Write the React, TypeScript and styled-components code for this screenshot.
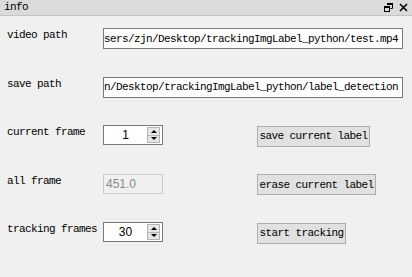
import React from "react";
import styled, { createGlobalStyle } from "styled-components";

const GlobalStyle = createGlobalStyle`
  html, body {
    margin: 0;
    padding: 0;
    background: #f0f0f0;
  }
  body {
    font-family: "Liberation Mono", "DejaVu Sans Mono", monospace;
  }
`

const Dock = styled.div`
  width: 412px;
  height: 277px;
  background: #f0f0f0;
  display: flex;
  flex-direction: column;
  overflow: hidden;
`

const TitleBar = styled.div`
  height: 15px;
  background: #dbdbdb;
  border-bottom: 1px solid #c4c4c4;
  display: flex;
  align-items: center;
  justify-content: space-between;
  padding: 0 4px 0 4px;
`

const Title = styled.span`
  font-size: 11px;
  letter-spacing: -0.6px;
  color: #000;
  line-height: 15px;
`

const TitleButtons = styled.div`
  display: flex;
  align-items: center;
  gap: 6px;
  height: 15px;
`

const Form = styled.div`
  display: grid;
  grid-template-columns: 96px 154px 1fr;
  grid-template-rows: repeat(5, 21.5px);
  row-gap: 27px;
  padding: 12px 9px 0 7px;
`

const Label = styled.span`
  font-size: 11px;
  letter-spacing: -0.6px;
  line-height: 13px;
  color: #000;
  align-self: start;
  padding-top: 1px;
  white-space: nowrap;
`

const PathField = styled.div`
  grid-column: 2 / 4;
  height: 21px;
  box-sizing: border-box;
  border: 1px solid #7a7a7a;
  background: #fff;
  display: flex;
  justify-content: flex-end;
  align-items: center;
  overflow: hidden;
  padding-right: 4px;
`

const PathText = styled.span`
  font-size: 11px;
  letter-spacing: -0.6px;
  white-space: nowrap;
  color: #000;
`

const SpinBox = styled.div<{ $disabled?: boolean }>`
  width: 60px;
  height: 20px;
  box-sizing: border-box;
  border: 1px solid ${p => (p.$disabled ? "#cccccc" : "#7a7a7a")};
  background: ${p => (p.$disabled ? "#f0f0f0" : "#fff")};
  display: flex;
  align-items: center;
  align-self: start;
`

const SpinValue = styled.span<{ $disabled?: boolean }>`
  flex: 1;
  font-family: "Liberation Sans", "DejaVu Sans", sans-serif;
  font-size: 12px;
  color: ${p => (p.$disabled ? "#8a8a8a" : "#000")};
  text-align: ${p => (p.$disabled ? "left" : "center")};
  padding-left: ${p => (p.$disabled ? "2px" : "0")};
`

const Arrows = styled.div`
  width: 11px;
  height: 14px;
  margin-right: 2px;
  border: 1px solid #b5b5b5;
  background: #e6e6e6;
  display: flex;
  flex-direction: column;
`

const ArrowCell = styled.div<{ $down?: boolean }>`
  flex: 1;
  display: flex;
  align-items: center;
  justify-content: center;
  border-top: ${p => (p.$down ? "1px solid #b5b5b5" : "none")};

  &::after {
    content: "";
    width: 0;
    height: 0;
    border-left: 3px solid transparent;
    border-right: 3px solid transparent;
    ${p => (p.$down ? "border-top: 3px solid #000;" : "border-bottom: 3px solid #000;")}
  }
`

const Button = styled.button`
  justify-self: start;
  align-self: start;
  height: 21px;
  box-sizing: border-box;
  padding: 0 1.5px;
  margin-top: 0.5px;
  border: 1px solid #adadad;
  background: #e1e1e1;
  font-family: "Liberation Mono", "DejaVu Sans Mono", monospace;
  font-size: 11px;
  letter-spacing: -0.6px;
  color: #000;
  white-space: nowrap;
  cursor: default;
`

function FloatIcon() {
  return (
    <svg width="9" height="9" viewBox="0 0 9 9">
      <path d="M3 0.5h5.5v5h-2" fill="none" stroke="#000" strokeWidth="1" />
      <rect x="3" y="0" width="6" height="2" fill="#000" />
      <rect x="0.5" y="3.5" width="5" height="5" fill="none" stroke="#000" strokeWidth="1" />
      <rect x="0" y="3" width="6" height="2" fill="#000" />
    </svg>
  )
}

function CloseIcon() {
  return (
    <svg width="9" height="9" viewBox="0 0 9 9">
      <path d="M1 1L8 8M8 1L1 8" stroke="#000" strokeWidth="1.6" />
    </svg>
  )
}

function Spin({ value, disabled }: { value: string; disabled?: boolean }) {
  return (
    <SpinBox $disabled={disabled}>
      <SpinValue $disabled={disabled}>{value}</SpinValue>
      {!disabled && (
        <Arrows>
          <ArrowCell />
          <ArrowCell $down />
        </Arrows>
      )}
    </SpinBox>
  )
}

export default function App() {
  return (
    <Dock>
      <GlobalStyle />
      <TitleBar>
        <Title>info</Title>
        <TitleButtons>
          <FloatIcon />
          <CloseIcon />
        </TitleButtons>
      </TitleBar>
      <Form>
        <Label>video path</Label>
        <PathField>
          <PathText>C:/Users/zjn/Desktop/trackingImgLabel_python/test.mp4</PathText>
        </PathField>

        <Label>save path</Label>
        <PathField>
          <PathText>C:/Users/zjn/Desktop/trackingImgLabel_python/label_detection</PathText>
        </PathField>

        <Label>current frame</Label>
        <Spin value="1" />
        <Button>save current label</Button>

        <Label>all frame</Label>
        <Spin value="451.0" disabled />
        <Button>erase current label</Button>

        <Label>tracking frames</Label>
        <Spin value="30" />
        <Button>start tracking</Button>
      </Form>
    </Dock>
  )
}
